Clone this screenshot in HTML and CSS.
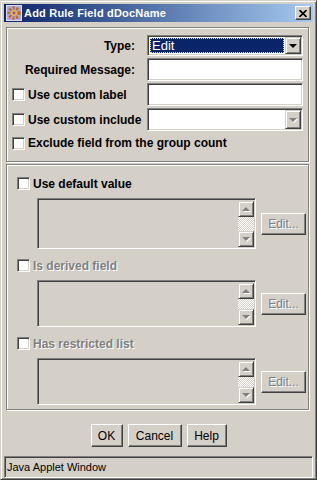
FILE: index.html
```html
<!DOCTYPE html>
<html lang="en">
<head>
    <meta charset="UTF-8">
    <meta name="viewport" content="width=device-width, initial-scale=1.0">
    <link rel="stylesheet" href="styles.css">
</head>
<body>
<div class="window">
    <!-- Title bar -->
    <div class="titlebar">
        <svg class="app-icon" width="16" height="16" viewBox="0 0 16 16">
            <rect x="0" y="0" width="16" height="16" fill="#b4a6dc"/>
            <rect x="0.5" y="0.5" width="15" height="15" fill="none" stroke="#e4dcf4"/>
            <circle cx="8" cy="8" r="5" fill="none" stroke="#b8701c" stroke-width="3.4" stroke-dasharray="2 1.6"/>
            <circle cx="8" cy="8" r="3" fill="#e8b04c"/>
            <circle cx="8" cy="8" r="1.4" fill="#8a5a8c"/>
        </svg>
        <span class="title">Add Rule Field dDocName</span>
        <span class="close-btn">
            <svg width="8" height="7" viewBox="0 0 8 7">
                <path d="M0.5 0 L7.5 7 M7.5 0 L0.5 7" stroke="#000" stroke-width="1.6"/>
            </svg>
        </span>
    </div>

    <div class="content">
        <!-- Upper panel -->
        <div class="panel panel-top">
            <div class="form-grid">
                <span class="lbl">Type:</span>
                <div class="combo">
                    <span class="combo-value"><span class="sel">Edit</span></span>
                    <span class="drop-btn"><i class="arrow-down"></i></span>
                </div>

                <span class="lbl">Required Message:</span>
                <div class="field"></div>

                <label class="check"><span class="box"></span>Use custom label</label>
                <div class="field"></div>

                <label class="check"><span class="box"></span>Use custom include</label>
                <div class="combo">
                    <span class="combo-value"></span>
                    <span class="drop-btn"><i class="arrow-down dim"></i></span>
                </div>

                <label class="check wide"><span class="box"></span>Exclude field from the group count</label>
            </div>
        </div>

        <!-- Lower panel -->
        <div class="panel panel-bottom">
            <div class="section">
                <label class="check"><span class="box"></span>Use default value</label>
                <div class="ta-row">
                    <div class="textarea ta-tall">
                        <div class="vscroll">
                            <span class="sb-btn"><i class="arrow-up dim"></i></span>
                            <span class="sb-track"></span>
                            <span class="sb-btn"><i class="arrow-down dim"></i></span>
                        </div>
                    </div>
                    <span class="btn btn-edit disabled">Edit...</span>
                </div>
            </div>

            <div class="section">
                <label class="check disabled"><span class="box"></span>Is derived field</label>
                <div class="ta-row">
                    <div class="textarea">
                        <div class="vscroll">
                            <span class="sb-btn"><i class="arrow-up dim"></i></span>
                            <span class="sb-track"></span>
                            <span class="sb-btn"><i class="arrow-down dim"></i></span>
                        </div>
                    </div>
                    <span class="btn btn-edit disabled">Edit...</span>
                </div>
            </div>

            <div class="section">
                <label class="check disabled"><span class="box"></span>Has restricted list</label>
                <div class="ta-row">
                    <div class="textarea">
                        <div class="vscroll">
                            <span class="sb-btn"><i class="arrow-up dim"></i></span>
                            <span class="sb-track"></span>
                            <span class="sb-btn"><i class="arrow-down dim"></i></span>
                        </div>
                    </div>
                    <span class="btn btn-edit disabled">Edit...</span>
                </div>
            </div>
        </div>

        <!-- Dialog buttons -->
        <div class="actions">
            <span class="btn btn-ok">OK</span>
            <span class="btn btn-cancel">Cancel</span>
            <span class="btn btn-help">Help</span>
        </div>

        <div class="status">Java Applet Window</div>
    </div>
</div>
</body>
</html>
```

FILE: styles.css
```css
body {
    margin: 0;
    background: #d4d0c8;
    font-family: "Liberation Sans", Arial, sans-serif;
    font-size: 12px;
    color: #000;
}

/* Window frame */
.window {
    width: 317px;
    height: 480px;
    box-sizing: border-box;
    background: #d4d0c8;
    border: 1px solid;
    border-color: #d4d0c8 #404040 #404040 #d4d0c8;
    box-shadow: inset 1px 1px #fff, inset -1px -1px #808080;
    padding: 3px 3px 1px 3px;
    display: flex;
    flex-direction: column;
}

.titlebar {
    height: 18px;
    flex: none;
    display: flex;
    align-items: center;
    padding: 0 2px;
    background: linear-gradient(to right, #0a246a, #a6caf0);
}

.app-icon {
    flex: none;
}

.title {
    margin-left: 2px;
    color: #fff;
    font-size: 11px;
    font-weight: bold;
    letter-spacing: 0.2px;
}

.close-btn {
    margin-left: auto;
    width: 16px;
    height: 14px;
    box-sizing: border-box;
    background: #d4d0c8;
    border: 1px solid;
    border-color: #fff #404040 #404040 #fff;
    box-shadow: inset -1px -1px #808080;
    display: flex;
    align-items: center;
    justify-content: center;
}

.content {
    flex: 1;
    display: flex;
    flex-direction: column;
    padding: 5px 0 0 2px;
}

/* Etched panels */
.panel {
    box-sizing: border-box;
    width: 303px;
    border: 1px solid #808080;
    box-shadow: inset 1px 1px #fff, 1px 1px #fff;
}

.panel-top {
    height: 135px;
    padding: 7px 5px 0 5px;
}

.panel-bottom {
    height: 246px;
    margin-top: 2px;
    padding: 12px 0 0 10px;
}

.form-grid {
    display: grid;
    grid-template-columns: minmax(0, 1fr) 156px;
    grid-template-rows: 21px 23px 23px 23px 13px;
    column-gap: 12px;
    row-gap: 2px;
}

.lbl {
    font-weight: bold;
    text-align: right;
    align-self: center;
}

.check {
    display: flex;
    align-items: center;
    gap: 3px;
    font-weight: bold;
    height: 13px;
    align-self: center;
    white-space: nowrap;
}

.check.wide {
    grid-column: 1 / 3;
    margin-top: 7px;
}

.check.disabled {
    color: #808080;
    text-shadow: 1px 1px #fff;
}

.box {
    width: 13px;
    height: 13px;
    flex: none;
    box-sizing: border-box;
    background: #fff;
    border: 1px solid;
    border-color: #808080 #fff #fff #808080;
    box-shadow: inset 1px 1px #404040, inset -1px -1px #d4d0c8;
}

/* Sunken inputs */
.field,
.combo,
.textarea {
    box-sizing: border-box;
    border: 1px solid;
    border-color: #808080 #fff #fff #808080;
    box-shadow: inset 1px 1px #404040, inset -1px -1px #d4d0c8;
    background: #fff;
}

.combo {
    display: flex;
    padding: 1px;
}

.combo-value {
    flex: 1;
    padding: 1px;
}

.sel {
    display: block;
    height: 100%;
    box-sizing: border-box;
    background: #0a246a;
    color: #fff;
    outline: 1px dotted #f0e68c;
    outline-offset: -1px;
    padding-left: 2px;
    font-size: 13px;
    line-height: 15px;
}

.drop-btn,
.sb-btn {
    width: 16px;
    flex: none;
    box-sizing: border-box;
    background: #d4d0c8;
    border: 1px solid;
    border-color: #d4d0c8 #404040 #404040 #d4d0c8;
    box-shadow: inset 1px 1px #fff, inset -1px -1px #808080;
    display: flex;
    align-items: center;
    justify-content: center;
}

.arrow-down,
.arrow-up {
    display: block;
    width: 0;
    height: 0;
    border-left: 4px solid transparent;
    border-right: 4px solid transparent;
}

.arrow-down {
    border-top: 4px solid #000;
}

.arrow-up {
    border-bottom: 4px solid #000;
}

.arrow-down.dim {
    border-top-color: #808080;
    filter: drop-shadow(1px 1px 0 #fff);
}

.arrow-up.dim {
    border-bottom-color: #808080;
    filter: drop-shadow(1px 1px 0 #fff);
}

/* Lower sections */
.section + .section {
    margin-top: 10px;
}

.ta-row {
    display: flex;
    align-items: center;
    margin: 8px 0 0 20px;
}

.textarea {
    width: 219px;
    height: 47px;
    background: #d4d0c8;
    padding: 2px 1px 1px 2px;
    display: flex;
    justify-content: flex-end;
}

.textarea.ta-tall {
    height: 51px;
}

.vscroll {
    width: 16px;
    display: flex;
    flex-direction: column;
}

.sb-btn {
    height: 16px;
}

.sb-track {
    flex: 1;
    background: repeating-conic-gradient(#fff 0 25%, #d4d0c8 0 50%) 0 0 / 2px 2px;
}

/* Buttons */
.btn {
    box-sizing: border-box;
    height: 23px;
    display: flex;
    align-items: center;
    justify-content: center;
    background: #d4d0c8;
    border: 1px solid;
    border-color: #fff #404040 #404040 #fff;
    box-shadow: inset -1px -1px #808080;
}

.btn.disabled {
    color: #808080;
    text-shadow: 1px 1px #fff;
}

.btn-edit {
    width: 45px;
    height: 22px;
    margin-left: 5px;
}

.actions {
    display: flex;
    justify-content: center;
    gap: 5px;
    margin-top: 14px;
    margin-left: -2px;
}

.btn-ok { width: 32px; }
.btn-cancel { width: 54px; }
.btn-help { width: 40px; }

.status {
    margin: 9px 0 0 -2px;
    height: 22px;
    box-sizing: border-box;
    border: 1px solid;
    border-color: #808080 #fff #fff #808080;
    box-shadow: inset 1px 1px #404040;
    padding-left: 2px;
    font-size: 11px;
    display: flex;
    align-items: center;
}
```
